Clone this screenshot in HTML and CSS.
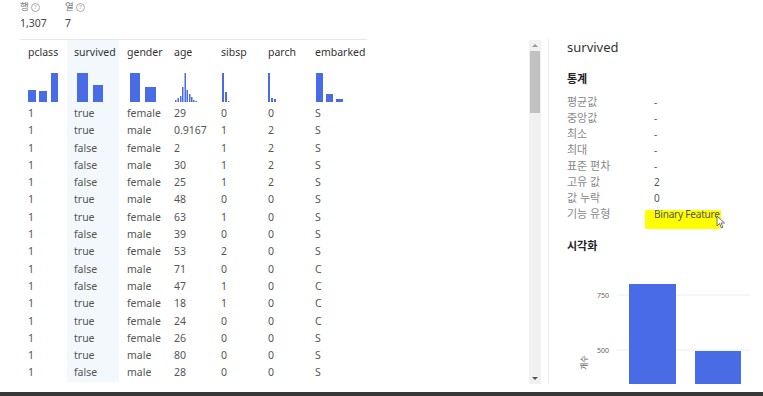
FILE: index.html
```html
<!DOCTYPE html>
<html lang="ko">
<head>
  <meta charset="UTF-8">
  <title>데이터 프로필</title>
  <link rel="stylesheet" href="styles.css">
</head>
<body>
  <div class="page">
    <div class="summary">
      <div class="stat">
        <div class="stat-label">행 <span class="help">?</span></div>
        <div class="stat-value">1,307</div>
      </div>
      <div class="stat">
        <div class="stat-label">열 <span class="help">?</span></div>
        <div class="stat-value">7</div>
      </div>
    </div>

    <div class="main">
      <div class="grid-wrap">
        <table class="grid">
          <colgroup>
            <col class="c47"><col class="c52"><col class="c47"><col class="c47"><col class="c47"><col class="c47"><col class="c60">
          </colgroup>
          <thead>
            <tr>
              <th>pclass
                <svg class="hist" width="40" height="32"><rect x="0" y="20" width="8" height="12"/><rect x="11" y="21" width="8" height="11"/><rect x="23" y="3" width="7" height="29"/></svg>
              </th>
              <th class="sel">survived
                <svg class="hist" width="40" height="32"><rect x="3" y="3" width="11" height="29"/><rect x="19" y="15" width="10" height="17"/></svg>
              </th>
              <th>gender
                <svg class="hist" width="40" height="32"><rect x="3" y="3" width="10" height="29"/><rect x="18" y="17" width="11" height="15"/></svg>
              </th>
              <th>age
                <svg class="hist" width="40" height="32"><rect x="1" y="30" width="1.5" height="2"/><rect x="3.5" y="28" width="1.5" height="4"/><rect x="6" y="26" width="1.5" height="6"/><rect x="8" y="17" width="1.5" height="15"/><rect x="10.5" y="3" width="1.5" height="29"/><rect x="12.5" y="20" width="1.5" height="12"/><rect x="15" y="24" width="1.5" height="8"/><rect x="17" y="27" width="1.5" height="5"/><rect x="19" y="30" width="1.5" height="2"/><rect x="21.5" y="31" width="1.5" height="1"/></svg>
              </th>
              <th>sibsp
                <svg class="hist" width="40" height="32"><rect x="1" y="3" width="2" height="29"/><rect x="4" y="22" width="2" height="10"/><rect x="7" y="31" width="1.5" height="1"/></svg>
              </th>
              <th>parch
                <svg class="hist" width="40" height="32"><rect x="0" y="3" width="2" height="29"/><rect x="3" y="28" width="2" height="4"/><rect x="6" y="29" width="2" height="3"/></svg>
              </th>
              <th>embarked
                <svg class="hist" width="40" height="32"><rect x="1" y="3" width="7" height="29"/><rect x="11" y="24" width="7" height="8"/><rect x="21" y="29" width="7" height="3"/></svg>
              </th>
            </tr>
          </thead>
          <tbody>
            <tr><td>1</td><td class="sel">true</td><td>female</td><td>29</td><td>0</td><td>0</td><td>S</td></tr>
            <tr><td>1</td><td class="sel">true</td><td>male</td><td>0.9167</td><td>1</td><td>2</td><td>S</td></tr>
            <tr><td>1</td><td class="sel">false</td><td>female</td><td>2</td><td>1</td><td>2</td><td>S</td></tr>
            <tr><td>1</td><td class="sel">false</td><td>male</td><td>30</td><td>1</td><td>2</td><td>S</td></tr>
            <tr><td>1</td><td class="sel">false</td><td>female</td><td>25</td><td>1</td><td>2</td><td>S</td></tr>
            <tr><td>1</td><td class="sel">true</td><td>male</td><td>48</td><td>0</td><td>0</td><td>S</td></tr>
            <tr><td>1</td><td class="sel">true</td><td>female</td><td>63</td><td>1</td><td>0</td><td>S</td></tr>
            <tr><td>1</td><td class="sel">false</td><td>male</td><td>39</td><td>0</td><td>0</td><td>S</td></tr>
            <tr><td>1</td><td class="sel">true</td><td>female</td><td>53</td><td>2</td><td>0</td><td>S</td></tr>
            <tr><td>1</td><td class="sel">false</td><td>male</td><td>71</td><td>0</td><td>0</td><td>C</td></tr>
            <tr><td>1</td><td class="sel">false</td><td>male</td><td>47</td><td>1</td><td>0</td><td>C</td></tr>
            <tr><td>1</td><td class="sel">true</td><td>female</td><td>18</td><td>1</td><td>0</td><td>C</td></tr>
            <tr><td>1</td><td class="sel">true</td><td>female</td><td>24</td><td>0</td><td>0</td><td>C</td></tr>
            <tr><td>1</td><td class="sel">true</td><td>female</td><td>26</td><td>0</td><td>0</td><td>S</td></tr>
            <tr><td>1</td><td class="sel">true</td><td>male</td><td>80</td><td>0</td><td>0</td><td>S</td></tr>
            <tr><td>1</td><td class="sel">false</td><td>male</td><td>28</td><td>0</td><td>0</td><td>S</td></tr>
          </tbody>
        </table>
      </div>

      <div class="scrollbar">
        <div class="arrow up"></div>
        <div class="thumb"></div>
        <div class="track"></div>
        <div class="arrow down"></div>
      </div>

      <div class="details">
        <div class="col-title">survived</div>
        <div class="section-title">통계</div>
        <div class="stats">
          <div class="label">평균값</div><div class="value">-</div>
          <div class="label">중앙값</div><div class="value">-</div>
          <div class="label">최소</div><div class="value">-</div>
          <div class="label">최대</div><div class="value">-</div>
          <div class="label">표준 편차</div><div class="value">-</div>
          <div class="label">고유 값</div><div class="value">2</div>
          <div class="label">값 누락</div><div class="value">0</div>
          <div class="label">기능 유형</div><div class="value"><span class="marker">Binary Feature</span>
            <svg class="cursor" width="10" height="14" viewBox="0 0 10 14"><path d="M1 1 L1 11 L3.5 8.5 L5.5 13 L7 12.3 L5 8 L8.5 8 Z" fill="#fff" stroke="#555" stroke-width="0.8"/></svg>
          </div>
        </div>
        <div class="section-title viz">시각화</div>
        <div class="chart">
          <svg width="214" height="127">
            <line x1="68" y1="37" x2="201" y2="37" stroke="#eeeeee"/>
            <line x1="68" y1="92" x2="201" y2="92" stroke="#eeeeee"/>
            <text x="60" y="40" text-anchor="end" class="tick">750</text>
            <text x="60" y="95" text-anchor="end" class="tick">500</text>
            <text x="0" y="0" class="axis" transform="translate(38 112) rotate(-90)">개수</text>
            <rect x="80" y="26" width="47" height="110" fill="#4a6be6"/>
            <rect x="146" y="93" width="46" height="40" fill="#4a6be6"/>
          </svg>
        </div>
      </div>
    </div>

    <div class="bottom-bar"></div>
  </div>
</body>
</html>
```

FILE: styles.css
```css
body {
  margin: 0;
  background: #fff;
  font-family: 'Noto Sans', 'Noto Sans CJK KR', sans-serif;
  color: #444;
  overflow: hidden;
}
.page {
  height: 396px;
  display: flex;
  flex-direction: column;
}
.summary {
  display: flex;
  padding: 1px 0 0 20px;
  height: 39px;
  box-sizing: border-box;
}
.stat {
  width: 45px;
}
.stat-label {
  font-size: 9.5px;
  line-height: 12px;
  color: #777;
  display: flex;
  align-items: center;
  gap: 2px;
}
.help {
  display: inline-block;
  width: 7px;
  height: 7px;
  border: 1px solid #aaa;
  border-radius: 50%;
  font-size: 6px;
  line-height: 7px;
  text-align: center;
  color: #999;
}
.stat-value {
  font-size: 10.5px;
  line-height: 14px;
  margin-top: 3px;
  color: #444;
}
.main {
  display: flex;
  height: 346px;
}
.grid-wrap {
  width: 529px;
  flex: none;
  padding-left: 20px;
  box-sizing: border-box;
  overflow: hidden;
}
.grid {
  border-collapse: collapse;
  table-layout: fixed;
  width: 347px;
  border-top: 1px solid #e6e6e6;
  font-size: 10.5px;
}
.c47 { width: 47px; }
.c52 { width: 52px; }
.c60 { width: 60px; }
.grid th {
  font-weight: normal;
  color: #333;
  text-align: left;
  vertical-align: top;
  padding: 5px 0 3px 8px;
  line-height: 14px;
  white-space: nowrap;
}
.grid .hist {
  display: block;
  margin-top: 11px;
  fill: #4a6be6;
}
.grid td {
  padding: 0 0 0 8px;
  line-height: 17.3px;
  height: 17.3px;
  color: #555;
  white-space: nowrap;
}
.grid .sel {
  background: #f3f8fc;
  padding-left: 7px;
}
.scrollbar {
  width: 12px;
  flex: none;
  margin-top: 1px;
  height: 344px;
  background: #f1f1f1;
  display: flex;
  flex-direction: column;
}
.arrow {
  height: 11px;
  position: relative;
}
.arrow::after {
  content: '';
  position: absolute;
  left: 3px;
  top: 4px;
  border-left: 3px solid transparent;
  border-right: 3px solid transparent;
}
.arrow.up::after { border-bottom: 3px solid #999; }
.arrow.down::after { border-top: 3px solid #555; }
.thumb {
  height: 62px;
  background: #c1c1c1;
  margin: 0 1px;
}
.track { flex: 1; }
.details {
  margin-left: 7px;
  border-left: 1px solid #ececec;
  padding-left: 18px;
  flex: 1;
  height: 345px;
  overflow: hidden;
}
.col-title {
  font-size: 13px;
  line-height: 16px;
  color: #333;
}
.section-title {
  margin-top: 17px;
  font-size: 11px;
  font-weight: bold;
  line-height: 14px;
  color: #222;
}
.stats {
  margin-top: 8px;
  display: grid;
  grid-template-columns: 87px 1fr;
  font-size: 11px;
  line-height: 16px;
}
.stats .label { color: #888; }
.stats .value { color: #555; position: relative; font-size: 10px; }
.marker {
  display: inline-block;
  vertical-align: top;
  line-height: 16px;
  padding: 0 1px 7px 9px;
  margin: 0 0 -7px -9px;
  background: linear-gradient(transparent 4px, #ffff00 4px);
  border-radius: 0 0 3px 2px;
  letter-spacing: -0.2px;
}
.cursor {
  position: absolute;
  left: 62px;
  top: 9px;
}
.chart {
  margin: 5px 0 0 -18px;
  height: 127px;
  overflow: hidden;
}
.chart .tick {
  font-size: 7px;
  fill: #666;
}
.chart .axis {
  font-size: 8px;
  fill: #666;
}
.bottom-bar {
  margin-top: auto;
  height: 4px;
  background: #383838;
}
```
